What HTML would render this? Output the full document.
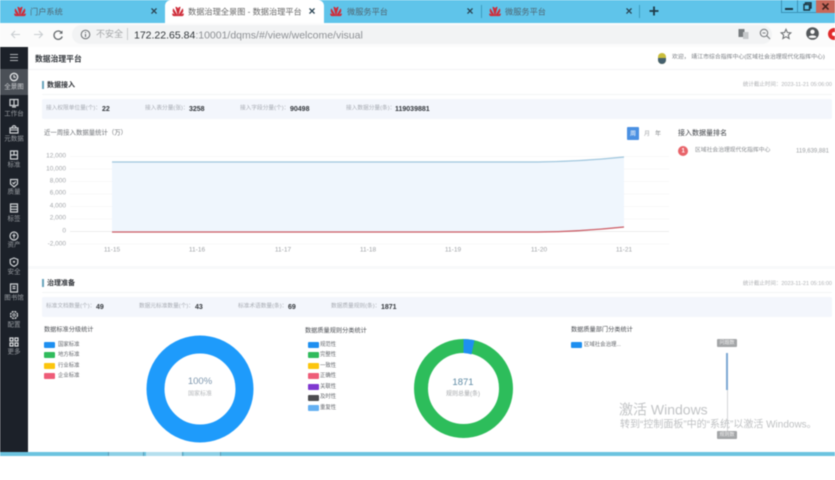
<!DOCTYPE html>
<html lang="zh">
<head>
<meta charset="utf-8">
<title>数据治理全景图 - 数据治理平台</title>
<style>
html,body{margin:0;padding:0;background:#fff;}
body{width:835px;height:480px;overflow:hidden;position:relative;font-family:"Liberation Sans","Noto Sans CJK SC",sans-serif;}
#w{position:absolute;left:0;top:0;width:835px;height:480px;filter:blur(.5px);overflow:hidden;}
#w div,#w span,#w svg{position:absolute;}
.t{white-space:nowrap;line-height:1;transform:translateY(calc(-50% + .5px));}
.tab{font-size:8.2px;color:#4f6672;}
.x{font-size:12px;font-weight:bold;color:#2c4655;transform:translate(-50%,-50%);line-height:1;white-space:nowrap;}
.sl{font-size:6.5px;color:#9a9ea3;width:28px;left:0;text-align:center;line-height:1;transform:translateY(calc(-50% + .5px));white-space:nowrap;}
.ax{font-size:6.5px;color:#a3a6aa;width:30px;left:36px;text-align:right;line-height:1;transform:translateY(calc(-50% + .5px));}
.xl{font-size:6.5px;color:#9ea1a5;width:30px;text-align:center;line-height:1;top:250px;transform:translateY(calc(-50% + .5px));}
.sb{font-size:5.700px;color:#a7abb2;}
.sv{font-size:7px;font-weight:bold;color:#33373c;}
.h{font-size:7px;font-weight:bold;color:#2e3136;}
.ct{font-size:6.200px;color:#4a4d52;}
.lg{font-size:5.400px;color:#63666b;}
.sw{width:11px;height:6px;border-radius:1px;}
.bar{width:1.5px;height:8px;background:#6aa5bd;}
.hw path{fill:#cf2d3a;stroke:#cf2d3a;stroke-width:.7;}
</style>
</head>
<body>
<div id="w">
  <!-- tab strip -->
  <div style="left:0;top:0;width:835px;height:23px;background:#5fc4ea"></div>
  <div style="left:165px;top:0;width:159px;height:23px;background:#fff;border-radius:6px 6px 0 0"></div>

  <svg class="hw" style="left:14px;top:5px" width="12" height="12" viewBox="0 0 12 12"><path d="M6 10.5 3.8 2.2C5 2 5.8 3 6 5.5 6.2 3 7 2 8.2 2.2ZM5.4 10.5 1.4 4C.4 6 1.6 8.7 5.4 10.5ZM6.6 10.5 10.6 4C11.6 6 10.400 8.700 6.600 10.500ZM5 10.800H1.800C.8 10.800.4 9.600.6 8.800ZM7 10.800H10.200C11.200 10.800 11.600 9.600 11.400 8.800Z"/></svg>
  <span class="t tab" style="left:30px;top:12px">门户系统</span>
  <span class="x" style="left:154px;top:11px">×</span>

  <svg class="hw" style="left:172px;top:5px" width="12" height="12" viewBox="0 0 12 12"><path d="M6 10.5 3.8 2.2C5 2 5.8 3 6 5.5 6.2 3 7 2 8.2 2.2ZM5.4 10.5 1.4 4C.4 6 1.6 8.7 5.4 10.5ZM6.6 10.5 10.6 4C11.6 6 10.400 8.700 6.600 10.500ZM5 10.800H1.800C.8 10.800.4 9.600.6 8.800ZM7 10.800H10.200C11.200 10.800 11.600 9.600 11.400 8.800Z"/></svg>
  <span class="t tab" style="left:188px;top:12px;color:#666">数据治理全景图 - 数据治理平台</span>
  <span class="x" style="left:312px;top:11px">×</span>

  <svg class="hw" style="left:330px;top:5px" width="12" height="12" viewBox="0 0 12 12"><path d="M6 10.5 3.8 2.2C5 2 5.8 3 6 5.5 6.2 3 7 2 8.2 2.2ZM5.4 10.5 1.4 4C.4 6 1.6 8.7 5.4 10.5ZM6.6 10.5 10.6 4C11.6 6 10.400 8.700 6.600 10.500ZM5 10.800H1.800C.8 10.800.4 9.600.6 8.800ZM7 10.800H10.200C11.200 10.800 11.600 9.600 11.400 8.800Z"/></svg>
  <span class="t tab" style="left:347px;top:12px">微服务平台</span>
  <span class="x" style="left:470px;top:11px">×</span>
  <div style="left:481px;top:5px;width:1px;height:13px;background:#3c9cc0"></div>

  <svg class="hw" style="left:489px;top:5px" width="12" height="12" viewBox="0 0 12 12"><path d="M6 10.5 3.8 2.2C5 2 5.8 3 6 5.5 6.2 3 7 2 8.2 2.2ZM5.4 10.5 1.4 4C.4 6 1.6 8.7 5.4 10.5ZM6.6 10.5 10.6 4C11.6 6 10.400 8.700 6.600 10.500ZM5 10.800H1.800C.8 10.800.4 9.600.6 8.800ZM7 10.800H10.200C11.200 10.800 11.600 9.600 11.400 8.800Z"/></svg>
  <span class="t tab" style="left:505px;top:12px">微服务平台</span>
  <span class="x" style="left:629px;top:11px">×</span>
  <div style="left:639px;top:5px;width:1px;height:13px;background:#3c9cc0"></div>
  <svg style="left:649px;top:6px" width="10" height="10" viewBox="0 0 10 10"><path d="M5 .5V9.500M.5 5H9.500" stroke="#1f3a48" stroke-width="1.800"/></svg>

  <!-- window controls -->
  <div style="left:781px;top:0;width:17px;height:13px;background:#5fc4ea;border:1px solid #3b93b6;border-top:0;box-sizing:border-box"></div>
  <div style="left:785px;top:8px;width:8px;height:2px;background:#1b3440"></div>
  <div style="left:798px;top:0;width:18px;height:13px;background:#5fc4ea;border-bottom:1px solid #3b93b6;box-sizing:border-box"></div>
  <svg style="left:803px;top:2px" width="9" height="9" viewBox="0 0 9 9"><path d="M2.500 2.500V.8H8V6H6.500M1 2.500H6.500V8H1Z" fill="none" stroke="#1b3440" stroke-width="1.400"/></svg>
  <div style="left:816px;top:0;width:19px;height:13px;background:#c8685a"></div>
  <svg style="left:822px;top:3px" width="7" height="7" viewBox="0 0 7 7"><path d="M.5.5 6.500 6.500M6.500.5.500 6.500" stroke="#43221d" stroke-width="1.600"/></svg>

  <!-- toolbar -->
  <div style="left:0;top:23px;width:835px;height:24px;background:#fbfbfb"></div>
  <div style="left:72px;top:25px;width:700px;height:19px;background:#f2f3f4;border-radius:10px"></div>
  <svg style="left:10px;top:29px" width="11" height="11" viewBox="0 0 11 11"><path d="M10 5.500H1.500M5 2 1.500 5.500 5 9" fill="none" stroke="#c9cdd0" stroke-width="1.100"/></svg>
  <svg style="left:33px;top:29px" width="11" height="11" viewBox="0 0 11 11"><path d="M1 5.500H9.500M6 2 9.500 5.500 6 9" fill="none" stroke="#c9cdd0" stroke-width="1.100"/></svg>
  <svg style="left:52px;top:29px" width="12" height="12" viewBox="0 0 12 12"><path d="M9.800 4A4.200 4.200 0 1 0 10.200 7.500" fill="none" stroke="#666a6d" stroke-width="1.300"/><path d="M10.500 1.500V4.800H7.200Z" fill="#666a6d"/></svg>
  <svg style="left:80px;top:29px" width="11" height="11" viewBox="0 0 11 11"><circle cx="5.500" cy="5.500" r="4.300" fill="none" stroke="#6b6f72"/><path d="M5.500 5V8M5.500 3V4" stroke="#6b6f72" stroke-width="1.100"/></svg>
  <span class="t" style="left:96px;top:34px;font-size:9px;color:#a3a5a7">不安全</span>
  <div style="left:127px;top:28px;width:1px;height:12px;background:#c9cbcd"></div>
  <span class="t" style="left:134px;top:34.500px;font-size:10.500px;color:#8d9094"><span style="position:static;color:#2f3438">172.22.65.84</span>:10001/dqms/#/view/welcome/visual</span>
  <svg style="left:738px;top:28px" width="11" height="12" viewBox="0 0 11 12"><rect x=".5" y="1" width="6" height="8" fill="#777b7e"/><rect x="5" y="4" width="5.500" height="7" fill="#c6c9cb"/></svg>
  <svg style="left:759px;top:28px" width="12" height="12" viewBox="0 0 12 12"><circle cx="5" cy="5" r="3.700" fill="none" stroke="#7c7f82" stroke-width="1.100"/><path d="M7.800 7.800 11 11M3.500 5H6.500" stroke="#7c7f82" stroke-width="1.100"/></svg>
  <svg style="left:780px;top:28px" width="12" height="12" viewBox="0 0 12 12"><path d="M6 1.300 7.400 4.500 10.900 4.800 8.300 7.100 9.100 10.500 6 8.700 2.900 10.500 3.700 7.100 1.100 4.800 4.600 4.500Z" fill="none" stroke="#6f7275" stroke-width="1.100"/></svg>
  <svg style="left:806px;top:27px" width="13" height="13" viewBox="0 0 13 13"><circle cx="6.500" cy="6.500" r="6.300" fill="#54585b"/><circle cx="6.500" cy="4.800" r="2.200" fill="#fbfbfb"/><path d="M2.500 10C3.500 7.900 9.500 7.900 10.500 10 9 11.400 4 11.400 2.500 10Z" fill="#fbfbfb"/></svg>
  <div style="left:828px;top:28px;width:12px;height:12px;border-radius:50%;background:#e02b2b"></div>
  <div style="left:832px;top:32px;width:4px;height:4px;border-radius:50%;background:#fff"></div>

  <!-- sidebar -->
  <div style="left:0;top:47px;width:28px;height:405px;background:#1c2129"></div>
  <div style="left:0;top:69px;width:28px;height:26px;background:#4b5057"></div>
  <svg style="left:9px;top:53px" width="10" height="9" viewBox="0 0 10 9"><path d="M1 1.500H9M1 4.500H9M1 7.500H9" stroke="#aeb1b5" stroke-width="1"/></svg>

  <svg style="left:9px;top:72px" width="10" height="10" viewBox="0 0 10 10"><circle cx="5" cy="5" r="3.700" fill="none" stroke="#e0e2e4" stroke-width="1.300"/><path d="M5 3V5.200H7" stroke="#e0e2e4" fill="none"/></svg>
  <span class="sl" style="top:87px;color:#ced0d3">全景图</span>

  <svg style="left:9px;top:98px" width="10" height="10" viewBox="0 0 10 10"><path d="M1 1.500H9V7.500H1ZM5 1.500V7.500M3 9H7" fill="none" stroke="#d0d3d6" stroke-width="1.200"/></svg>
  <span class="sl" style="top:114px">工作台</span>

  <svg style="left:9px;top:124px" width="10" height="10" viewBox="0 0 10 10"><path d="M1 4H9V9H1ZM3 4C3 1 7 1 7 4" fill="none" stroke="#d0d3d6" stroke-width="1.200"/><path d="M1 6H9" stroke="#d0d3d6"/></svg>
  <span class="sl" style="top:139px">元数据</span>

  <svg style="left:9px;top:150px" width="10" height="10" viewBox="0 0 10 10"><path d="M1.500 1H8.500V9H1.500ZM1.500 5H8.500M5 1V5" fill="none" stroke="#d0d3d6" stroke-width="1.200"/></svg>
  <span class="sl" style="top:165px">标准</span>

  <svg style="left:9px;top:178px" width="10" height="10" viewBox="0 0 10 10"><path d="M1.500 1.500H8.500V6L5 9 1.500 6ZM3.500 4.500 4.700 5.800 6.800 3.500" fill="none" stroke="#d0d3d6" stroke-width="1.200"/></svg>
  <span class="sl" style="top:192px">质量</span>

  <svg style="left:9px;top:203px" width="10" height="10" viewBox="0 0 10 10"><path d="M1.500 1H8.500V9H1.500ZM1.500 3.700H8.500M1.500 6.300H8.500" fill="none" stroke="#d0d3d6" stroke-width="1.200"/></svg>
  <span class="sl" style="top:219px">标签</span>

  <svg style="left:9px;top:231px" width="10" height="10" viewBox="0 0 10 10"><circle cx="5" cy="5" r="4" fill="none" stroke="#d0d3d6" stroke-width="1.200"/><path d="M5 2.500V7.500M3.500 4 5 5.500 6.500 4" fill="none" stroke="#d0d3d6" stroke-width=".9"/></svg>
  <span class="sl" style="top:245px">资产</span>

  <svg style="left:9px;top:257px" width="10" height="10" viewBox="0 0 10 10"><path d="M5 1 8.800 2.500V5.500C8.800 7.300 7 8.500 5 9.300 3 8.500 1.200 7.300 1.200 5.500V2.500Z" fill="none" stroke="#d0d3d6" stroke-width="1.200"/><circle cx="5" cy="4.800" r="1.100" fill="#d0d3d6"/></svg>
  <span class="sl" style="top:272px">安全</span>

  <svg style="left:9px;top:283px" width="10" height="10" viewBox="0 0 10 10"><path d="M1.500 1H8.500V9H1.500ZM3.500 3.500H6.500M3.500 5.500H6.500" fill="none" stroke="#d0d3d6" stroke-width="1.200"/></svg>
  <span class="sl" style="top:298px">图书馆</span>

  <svg style="left:9px;top:310px" width="10" height="10" viewBox="0 0 10 10"><circle cx="5" cy="5" r="3.500" fill="none" stroke="#d0d3d6" stroke-width="1.400" stroke-dasharray="2 .8"/><circle cx="5" cy="5" r="1.200" fill="none" stroke="#d0d3d6" stroke-width=".8"/></svg>
  <span class="sl" style="top:325px">配置</span>

  <svg style="left:9px;top:337px" width="10" height="10" viewBox="0 0 10 10"><path d="M1 1H4V4H1ZM6 1H9V4H6ZM1 6H4V9H1ZM6 6H9V9H6Z" fill="none" stroke="#dcdee0" stroke-width="1.200"/></svg>
  <span class="sl" style="top:352px">更多</span>

  <!-- header -->
  <span class="t" style="left:35px;top:58.500px;font-size:7.800px;font-weight:bold;color:#33373c">数据治理平台</span>
  <div style="left:28px;top:69px;width:807px;height:1px;background:#f3f4f5"></div>
  <div style="left:658px;top:53px;width:8px;height:11px;border-radius:4px;background:#c9bd3b"></div>
  <div style="left:658px;top:58px;width:8px;height:6px;border-radius:0 0 4px 4px;background:#45606e"></div>
  <span class="t" style="left:672px;top:57.500px;font-size:5.900px;color:#777b80">欢迎， 靖江市综合指挥中心(区域社会治理现代化指挥中心)</span>

  <!-- section 1 -->
  <div class="bar" style="left:42px;top:81px"></div>
  <span class="t h" style="left:47px;top:85px">数据接入</span>
  <span class="t" style="right:3px;top:85px;font-size:5.500px;color:#b0b2b5">统计截止时间：2023-11-21 05:06:00</span>
  <div style="left:42px;top:94px;width:790px;height:1px;background:#f4f5f6"></div>
  <div style="left:42px;top:99px;width:790px;height:20px;background:#f3f6fc;border-radius:2px"></div>
  <span class="t sb" style="left:46px;top:109px">接入权限单位量(个)：</span><span class="t sv" style="left:102px;top:109px">22</span>
  <span class="t sb" style="left:145px;top:109px">接入表分量(张)：</span><span class="t sv" style="left:189px;top:109px">3258</span>
  <span class="t sb" style="left:240px;top:109px">接入字段分量(个)：</span><span class="t sv" style="left:290px;top:109px">90498</span>
  <span class="t sb" style="left:346px;top:109px">接入数据分量(条)：</span><span class="t sv" style="left:395px;top:109px">119039881</span>

  <span class="t" style="left:44px;top:133px;font-size:6.400px;color:#6e7176">近一周接入数据量统计（万）</span>
  <div style="left:627px;top:127px;width:12px;height:13px;background:#4a90e2;border-radius:1px"></div>
  <span class="t" style="left:630px;top:133.500px;font-size:6px;color:#fff">周</span>
  <span class="t" style="left:644px;top:133.500px;font-size:6px;color:#a5a8ab">月</span>
  <span class="t" style="left:655px;top:133.500px;font-size:6px;color:#85888b">年</span>

  <!-- chart -->
  <svg style="left:0;top:150px" width="680" height="100" viewBox="0 150 680 100">
    <path d="M70 156.500H669M70 169H669M70 181.500H669M70 194H669M70 206.500H669M70 219H669M70 244H669" stroke="#f8f8f9" stroke-width="1"/>
    <path d="M70 231.500H669" stroke="#eceded" stroke-width="1"/>
    <path d="M112 162H538C570 161.500 600 159.500 624 157V227C600 229.500 570 231.300 538 231.800H112Z" fill="#eff6fd"/>
    <path d="M112 162H538C570 161.500 600 159.500 624 157" fill="none" stroke="#9fc6dd" stroke-width="1.300"/>
    <path d="M112 232H538C570 231.800 600 229.500 624 227" fill="none" stroke="#cb5a63" stroke-width="1.300"/>
  </svg>
  <span class="ax" style="top:156px">12,000</span>
  <span class="ax" style="top:168.500px">10,000</span>
  <span class="ax" style="top:181px">8,000</span>
  <span class="ax" style="top:193px">6,000</span>
  <span class="ax" style="top:206px">4,000</span>
  <span class="ax" style="top:218px">2,000</span>
  <span class="ax" style="top:231px">0</span>
  <span class="ax" style="top:244px">-2,000</span>
  <span class="xl" style="left:97px">11-15</span>
  <span class="xl" style="left:182px">11-16</span>
  <span class="xl" style="left:268px">11-17</span>
  <span class="xl" style="left:353px">11-18</span>
  <span class="xl" style="left:438px">11-19</span>
  <span class="xl" style="left:524px">11-20</span>
  <span class="xl" style="left:609px">11-21</span>

  <!-- ranking -->
  <span class="t" style="left:678px;top:133px;font-size:7px;color:#3c3f44">接入数据量排名</span>
  <div style="left:678px;top:146px;width:10px;height:10px;border-radius:50%;background:#e8646a"></div>
  <span class="t" style="left:681.500px;top:151px;font-size:6px;color:#fff;font-weight:bold">1</span>
  <span class="t" style="left:695px;top:151px;font-size:5.800px;color:#85888c">区域社会治理现代化指挥中心</span>
  <span class="t" style="left:796px;top:151px;font-size:6px;color:#9a9da0">119,639,881</span>

  <div style="left:28px;top:266px;width:807px;height:3px;background:#f8f9fa"></div>

  <!-- section 2 -->
  <div class="bar" style="left:42px;top:279px"></div>
  <span class="t h" style="left:47px;top:283px">治理准备</span>
  <span class="t" style="right:3px;top:283.500px;font-size:5.500px;color:#b0b2b5">统计截止时间：2023-11-21 05:16:00</span>
  <div style="left:42px;top:292px;width:790px;height:1px;background:#f4f5f6"></div>
  <div style="left:42px;top:297px;width:790px;height:20px;background:#f3f6fc;border-radius:2px"></div>
  <span class="t sb" style="left:46px;top:307px">标准文档数量(个)：</span><span class="t sv" style="left:96px;top:307px">49</span>
  <span class="t sb" style="left:139px;top:307px">数据元标准数量(个)：</span><span class="t sv" style="left:195px;top:307px">43</span>
  <span class="t sb" style="left:238px;top:307px">标准术语数量(条)：</span><span class="t sv" style="left:288px;top:307px">69</span>
  <span class="t sb" style="left:331px;top:307px">数据质量规则(条)：</span><span class="t sv" style="left:381px;top:307px">1871</span>

  <!-- standards donut -->
  <span class="t ct" style="left:44px;top:330px">数据标准分级统计</span>
  <div class="sw" style="left:44px;top:342px;background:#1e8ff0"></div><span class="t lg" style="left:58px;top:345px">国家标准</span>
  <div class="sw" style="left:44px;top:352px;background:#30bb5c"></div><span class="t lg" style="left:58px;top:355px">地方标准</span>
  <div class="sw" style="left:44px;top:363px;background:#fcc50d"></div><span class="t lg" style="left:58px;top:366px">行业标准</span>
  <div class="sw" style="left:44px;top:373px;background:#ee5c78"></div><span class="t lg" style="left:58px;top:376px">企业标准</span>
  <svg style="left:146px;top:335px" width="108" height="108" viewBox="0 0 108 108"><circle cx="54" cy="54" r="44.500" fill="none" stroke="#1e9bfb" stroke-width="18"/></svg>
  <span class="t" style="left:170px;width:60px;text-align:center;top:381px;font-size:9.500px;color:#7e97ae">100%</span>
  <span class="t" style="left:170px;width:60px;text-align:center;top:394px;font-size:6px;color:#b3b6b9">国家标准</span>

  <!-- rules donut -->
  <span class="t ct" style="left:305px;top:330.500px">数据质量规则分类统计</span>
  <div class="sw" style="left:308px;top:342px;background:#1e8ff0"></div><span class="t lg" style="left:320px;top:344.500px">规范性</span>
  <div class="sw" style="left:308px;top:352px;background:#30bb5c"></div><span class="t lg" style="left:320px;top:355px">完整性</span>
  <div class="sw" style="left:308px;top:363px;background:#fcc50d"></div><span class="t lg" style="left:320px;top:365.500px">一致性</span>
  <div class="sw" style="left:308px;top:373px;background:#ee5c78"></div><span class="t lg" style="left:320px;top:376px">正确性</span>
  <div class="sw" style="left:308px;top:384px;background:#7f38d0"></div><span class="t lg" style="left:320px;top:386.500px">关联性</span>
  <div class="sw" style="left:308px;top:395px;background:#4c4c4f"></div><span class="t lg" style="left:320px;top:397px">及时性</span>
  <div class="sw" style="left:308px;top:405px;background:#64b0f2"></div><span class="t lg" style="left:320px;top:407.500px">重复性</span>
  <svg style="left:414px;top:339px" width="100" height="100" viewBox="0 0 100 100">
    <circle cx="49.500" cy="49.500" r="42.500" fill="none" stroke="#2dbd5b" stroke-width="14"/>
    <path d="M49.500 0A49.500 49.500 0 0 1 60.500 1.300L57.500 15.400A35.500 35.500 0 0 0 49.500 14Z" fill="#1e8ff0"/>
  </svg>
  <span class="t" style="left:433px;width:60px;text-align:center;top:382px;font-size:9.500px;color:#5f8ba5">1871</span>
  <span class="t" style="left:433px;width:60px;text-align:center;top:394px;font-size:6px;color:#a5a8ab">规则总量(条)</span>

  <!-- department -->
  <span class="t ct" style="left:571px;top:330px">数据质量部门分类统计</span>
  <div class="sw" style="left:571px;top:342px;background:#1e8ff0"></div><span class="t lg" style="left:584px;top:344.500px">区域社会治理...</span>
  <div style="left:717px;top:339px;width:20px;height:8px;background:#a3a5a7;border-radius:1px"></div>
  <span class="t" style="left:717px;width:20px;text-align:center;top:343px;font-size:5px;color:#f0f0f0">问题数</span>
  <div style="left:726px;top:353px;width:1.500px;height:37px;background:#7da8d3"></div>
  <div style="left:726.500px;top:390px;width:1px;height:41px;background:#d5d6d8"></div>
  <div style="left:717px;top:431px;width:20px;height:8px;background:#a3a5a7;border-radius:1px"></div>
  <span class="t" style="left:717px;width:20px;text-align:center;top:435px;font-size:5px;color:#f0f0f0">规则数</span>

  <!-- watermark -->
  <span class="t" style="left:619px;top:409px;font-size:14px;color:#c2c4c6">激活 Windows</span>
  <span class="t" style="left:620px;top:425px;font-size:10px;color:#bfc1c3">转到“控制面板”中的“系统”以激活 Windows。</span>

  <!-- taskbar sliver -->
  <div style="left:0;top:452px;width:835px;height:4px;background:#6cc3df"></div>
  <div style="left:108px;top:452px;width:36px;height:4px;background:#8bcfe5;border-left:1px solid #5a9cb5;border-right:1px solid #5a9cb5;box-sizing:border-box"></div>
  <div style="left:146px;top:452px;width:37px;height:4px;background:#b5dfee;border-right:1px solid #5a9cb5;box-sizing:border-box"></div>
  <div style="left:184px;top:452px;width:37px;height:4px;background:#8bcfe5;border-right:1px solid #5a9cb5;box-sizing:border-box"></div>
  <div style="left:0;top:456px;width:835px;height:24px;background:#fff"></div>
</div>
</body>
</html>
